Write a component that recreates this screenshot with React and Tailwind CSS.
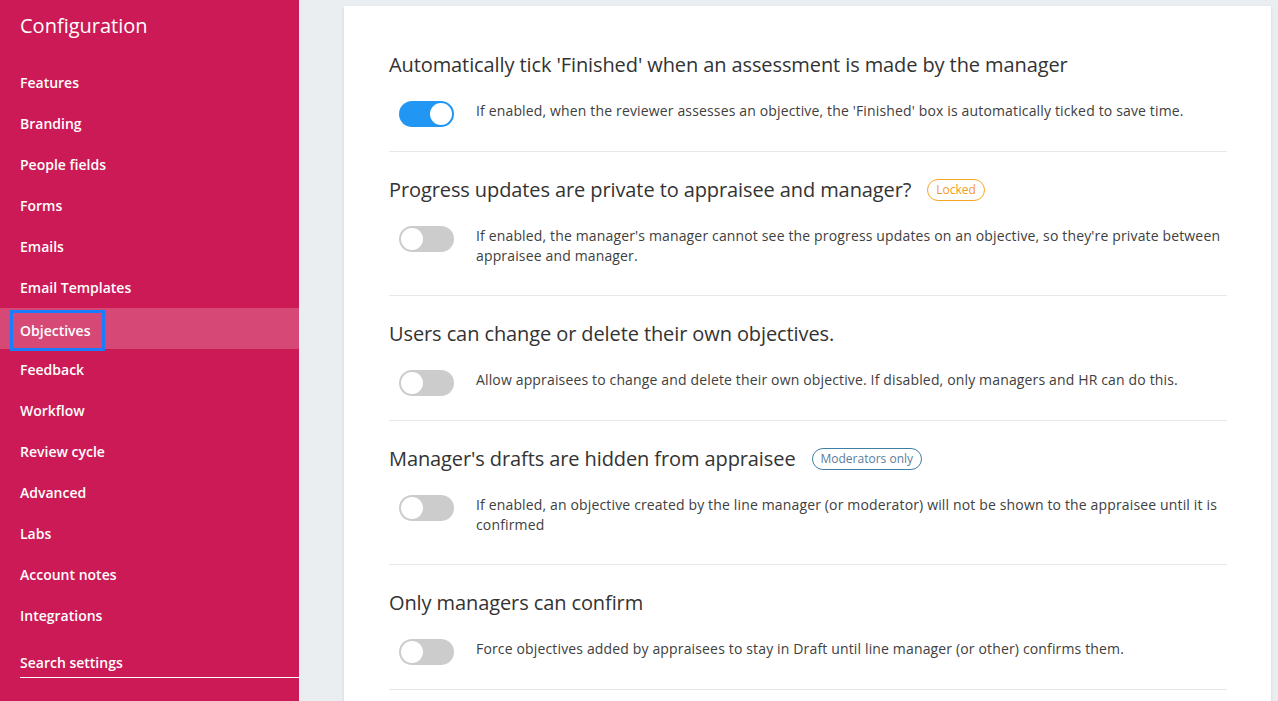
import { useState } from 'react';

const navItems = [
  'Features',
  'Branding',
  'People fields',
  'Forms',
  'Emails',
  'Email Templates',
  'Objectives',
  'Feedback',
  'Workflow',
  'Review cycle',
  'Advanced',
  'Labs',
  'Account notes',
  'Integrations',
];

const settings = [
  {
    title: "Automatically tick 'Finished' when an assessment is made by the manager",
    text: "If enabled, when the reviewer assesses an objective, the 'Finished' box is automatically ticked to save time.",
    on: true,
  },
  {
    title: 'Progress updates are private to appraisee and manager?',
    badge: 'locked',
    text: "If enabled, the manager's manager cannot see the progress updates on an objective, so they're private between appraisee and manager.",
    on: false,
  },
  {
    title: 'Users can change or delete their own objectives.',
    text: 'Allow appraisees to change and delete their own objective. If disabled, only managers and HR can do this.',
    on: false,
  },
  {
    title: "Manager's drafts are hidden from appraisee",
    badge: 'moderators',
    text: 'If enabled, an objective created by the line manager (or moderator) will not be shown to the appraisee until it is confirmed',
    on: false,
  },
  {
    title: 'Only managers can confirm',
    text: 'Force objectives added by appraisees to stay in Draft until line manager (or other) confirms them.',
    on: false,
  },
];

const Toggle = ({ on, onClick }) => (
  <button
    onClick={onClick}
    className={`relative block shrink-0 w-[55px] h-[26px] rounded-full ${on ? 'bg-[#2196f3]' : 'bg-[#cccccc]'}`}
  >
    <span
      className={`absolute top-[2px] w-[22px] h-[22px] rounded-full bg-white ${on ? 'left-[31px]' : 'left-[2px]'}`}
    />
  </button>
);

const Badge = ({ type }) =>
  type === 'locked' ? (
    <span className="ml-4 h-[22px] px-[8px] flex items-center rounded-full border border-[#f5a623] text-[#f39a1e] text-[12px]">
      Locked
    </span>
  ) : (
    <span className="ml-4 h-[22px] px-[8px] flex items-center rounded-full border border-[#3f7fa6] text-[#5b7d9c] text-[12px]">
      Moderators only
    </span>
  );

const App = () => {
  const [values, setValues] = useState(settings.map((s) => s.on));

  const flip = (i) => setValues((prev) => prev.map((v, j) => (j === i ? !v : v)));

  return (
    <div className="flex h-[701px] overflow-hidden bg-[#ebeef0] font-['Open_Sans',sans-serif]">
      <aside className="w-[299px] shrink-0 bg-[#cb1a55] text-white">
        <h1 className="pl-5 pt-[12px] text-[20px] leading-[28px]">Configuration</h1>

        <nav className="mt-[22px] flex flex-col">
          {navItems.map((item) =>
            item === 'Objectives' ? (
              <div key={item} className="h-[41px] flex items-start bg-[#d64977]">
                <span className="ml-[10px] mt-[2px] h-[41px] pl-[10px] pr-[15px] flex items-center text-[14px] font-semibold outline-[3px] outline-solid outline-[#1a7cff] -outline-offset-[3px]">
                  {item}
                </span>
              </div>
            ) : (
              <div key={item} className="h-[41px] flex items-center">
                <span className="ml-5 text-[14px] font-semibold">{item}</span>
              </div>
            )
          )}
        </nav>

        <div className="ml-5 mt-[17px] border-b border-white pb-[4px]">
          <input
            placeholder="Search settings"
            className="block w-full bg-transparent text-[14px] font-semibold text-white placeholder-white outline-none leading-[20px]"
          />
        </div>
      </aside>

      <main className="flex-1 min-w-0">
        <div className="ml-[45px] mr-[7px] mt-[6px] bg-white shadow-sm pl-[45px] pr-[44px] pt-[45px] pb-[60px]">
          {settings.map((s, i) => (
            <section key={i} className={`pb-6 border-b border-[#e8e8e8] ${i > 0 ? 'pt-6' : ''}`}>
              <div className="flex items-center">
                <h2 className="text-[20px] leading-[28px] text-[#333] tracking-[-0.1px]">{s.title}</h2>
                {s.badge && <Badge type={s.badge} />}
              </div>
              <div className="mt-[22px] flex items-start">
                <div className="ml-[10px] flex">
                  <Toggle on={values[i]} onClick={() => flip(i)} />
                </div>
                <p className="ml-[22px] mb-[5px] text-[14px] leading-[20px] text-[#404040] tracking-[0.15px]">{s.text}</p>
              </div>
            </section>
          ))}
        </div>
      </main>
    </div>
  );
};

export default App;
